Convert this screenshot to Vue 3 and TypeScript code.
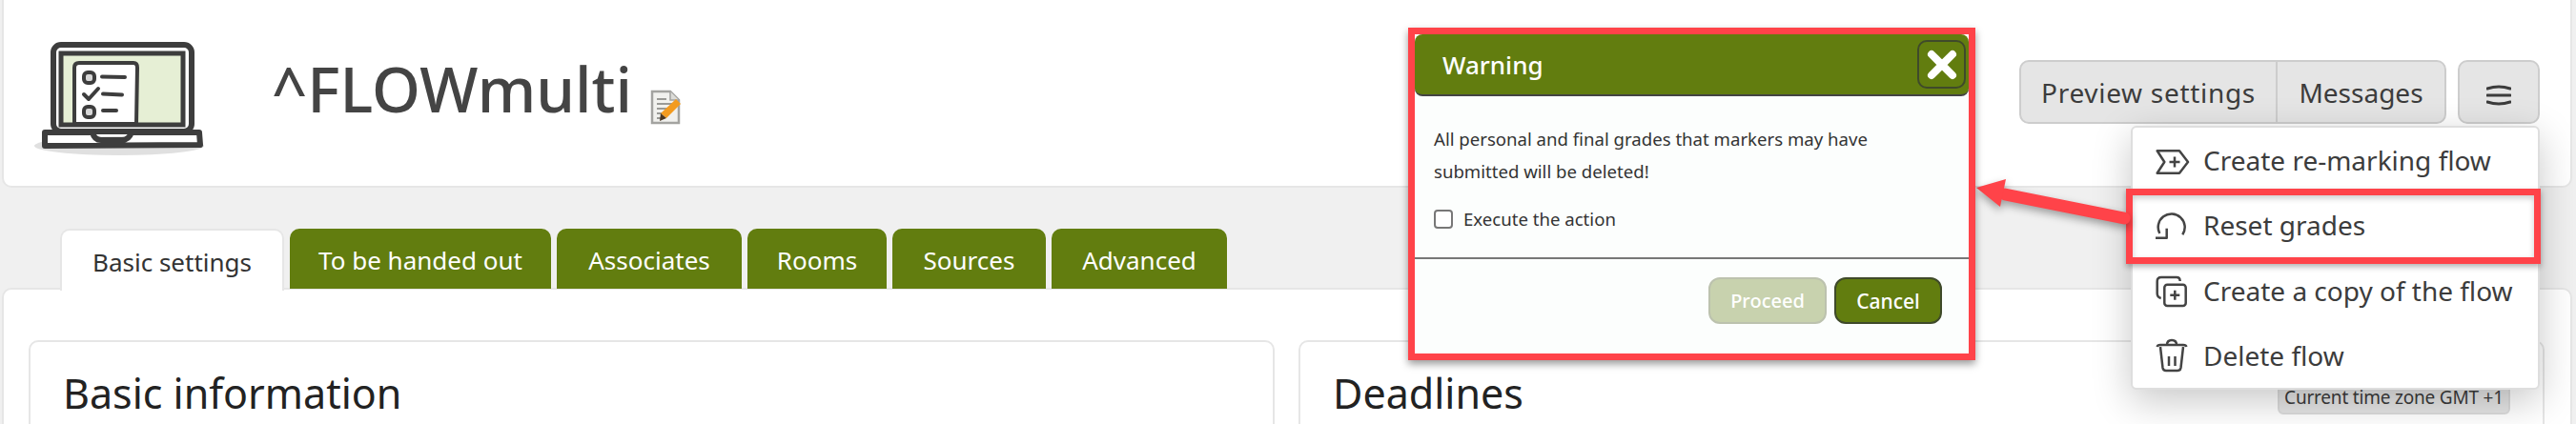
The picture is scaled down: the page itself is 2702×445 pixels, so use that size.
<template>
  <div class="page">
    <header class="cabecalho">
      <svg class="logo" viewBox="0 0 220 150" width="220" height="150">
        <ellipse cx="105" cy="133" rx="89" ry="10" fill="#e0e0e0" />
        <rect x="36" y="27" width="145" height="91" rx="8" fill="#fff" stroke="#3d3d3d" stroke-width="6" />
        <rect x="44" y="36" width="128" height="75" fill="#e6efd5" stroke="#3d3d3d" stroke-width="5" />
        <path d="M58 110 L58 51 Q58 46 63 46 L120 46 Q124 46 124 51 L123 110 Z" fill="#fff" stroke="#3d3d3d" stroke-width="4" />
        <rect x="68" y="56" width="11" height="11" rx="4" fill="#d8d8d8" stroke="#3d3d3d" stroke-width="4" />
        <path d="M87 60.5 L111 61" stroke="#3d3d3d" stroke-width="4" stroke-linecap="round" />
        <path d="M68 79 L73 84 L83 73" fill="none" stroke="#3d3d3d" stroke-width="4" stroke-linecap="round" stroke-linejoin="round" />
        <path d="M88 78.5 L108 79.5" stroke="#3d3d3d" stroke-width="4" stroke-linecap="round" />
        <rect x="68" y="92" width="11" height="11" rx="4" fill="#d8d8d8" stroke="#3d3d3d" stroke-width="4" />
        <path d="M88 96 L102 96" stroke="#3d3d3d" stroke-width="4" stroke-linecap="round" />
        <path d="M27 119 L77 119 Q79 127 86 127 L108 127 Q115 127 118 119 L189 119 L190 132 L27 133 Z" fill="#fff" stroke="#3d3d3d" stroke-width="6" stroke-linejoin="round" />
      </svg>
      <h1 class="titulo">^FLOWmulti</h1>
      <svg class="editar" viewBox="0 0 32 37" width="32" height="37">
        <path d="M2 2 L21 2 L30 11 L30 35 L2 35 Z" fill="#f1f1ee" stroke="#a3a3a0" stroke-width="2.5" />
        <path d="M21 2 L21 11 L30 11" fill="#dcdcd8" stroke="#a3a3a0" stroke-width="1.5" />
        <path d="M7 10 H17 M7 15 H23 M7 20 H20 M7 25 H15 M7 30 H13" stroke="#9a9a96" stroke-width="2" />
        <path d="M27 10 L32 15 L17 30 L11 25 Z" fill="#f39b1f" />
        <path d="M11 25 L17 30 L10 33 Z" fill="#4b3620" />
      </svg>
      <div class="acoes">
        <div class="grupo-botoes">
          <button class="botao">Preview settings</button>
          <button class="botao">Messages</button>
        </div>
        <button class="botao-menu" aria-label="Menu">
          <svg viewBox="0 0 26 22" width="26" height="22">
            <path d="M1 4 Q13 0 25 4 M1 11 H25 M1 18 Q13 22 25 18" fill="none" stroke="#3c3c3c" stroke-width="3" stroke-linecap="round" />
          </svg>
        </button>
      </div>
    </header>

    <nav class="abas">
      <span v-for="(aba, i) in abas" :key="aba" class="aba" :class="{ ativa: i === 0 }">{{ aba }}</span>
    </nav>

    <main class="conteudo">
      <section class="cartao">
        <h2>Basic information</h2>
      </section>
      <section class="cartao">
        <h2>Deadlines</h2>
        <span class="fuso">Current time zone GMT +1</span>
      </section>
    </main>

    <ul class="menu">
      <li>
        <svg viewBox="0 0 36 36" width="36" height="36">
          <path d="M1.7 8.3 H25 L34 20 L25 31.7 H1.7 L9.3 20 Z" class="traco" />
          <path d="M14.5 20 H25.5 M20 14.5 V25.5" class="traco" />
        </svg>
        Create re-marking flow
      </li>
      <li>
        <svg viewBox="0 0 36 36" width="36" height="36">
          <path d="M28.3 28.3 A14 14 0 1 0 4.3 27" class="traco" />
          <path d="M0 31.7 H11.7 V21.7" class="traco" />
        </svg>
        Reset grades
      </li>
      <li>
        <svg viewBox="0 0 36 36" width="36" height="36">
          <rect x="9.3" y="11.7" width="22.4" height="22.4" rx="3" class="traco" />
          <path d="M5.7 26 Q1.7 25 1.7 21 V8.3 Q1.7 4 6 4 H22 Q25.7 4 25.7 8" class="traco" />
          <path d="M15.3 22.7 H25.3 M20.3 17.7 V27.7" class="traco" />
        </svg>
        Create a copy of the flow
      </li>
      <li>
        <svg viewBox="0 0 36 36" width="36" height="36">
          <path d="M1.7 9 Q2 7 5 7 H29 Q32 7 32.3 9" class="traco" />
          <path d="M5 9 L7.5 31 Q8 34 11 34 H23 Q26 34 26.5 31 L29 9" class="traco" />
          <path d="M12 7 Q12 2 17 2 Q22 2 22 7 M14 19 V29 M20.5 19 V29" class="traco" />
        </svg>
        Delete flow
      </li>
    </ul>

    <div class="destaque"></div>
    <svg class="seta" viewBox="0 0 170 50" width="170" height="50">
      <path d="M35 17 L160 42" stroke="#ff4349" stroke-width="13" stroke-linecap="round" />
      <path d="M5 10 L36 1 L30 30 Z" fill="#ff4349" />
    </svg>

    <div class="moldura">
      <div class="modal">
        <div class="modal-topo">
          <span>Warning</span>
          <button class="fechar" aria-label="Close">
            <svg viewBox="0 0 32 32" width="32" height="32">
              <path d="M5 5 L27 27 M27 5 L5 27" stroke="#fff" stroke-width="8" stroke-linecap="round" />
            </svg>
          </button>
        </div>
        <div class="modal-corpo">
          <p>All personal and final grades that markers may have<br />submitted will be deleted!</p>
          <label class="confirma">
            <span class="caixa"></span>
            Execute the action
          </label>
        </div>
        <div class="modal-rodape">
          <button class="btn desativado">Proceed</button>
          <button class="btn">Cancel</button>
        </div>
      </div>
    </div>
  </div>
</template>

<script setup lang="ts">
const abas: string[] = ['Basic settings', 'To be handed out', 'Associates', 'Rooms', 'Sources', 'Advanced'];
</script>

<style>
html, body {
  margin: 0;
  overflow: hidden;
}
</style>

<style scoped>
.page {
  position: relative;
  width: 2702px;
  height: 445px;
  overflow: hidden;
  box-sizing: border-box;
  padding: 0 4px 0 2px;
  background: #f0f0f0;
  font-family: "Noto Sans", "Open Sans", sans-serif;
  color: #3c3c3c;
}

.cabecalho {
  display: flex;
  align-items: flex-start;
  height: 197px;
  box-sizing: border-box;
  background: #fff;
  border: 2px solid #e6e6e6;
  border-top: 0;
  border-radius: 0 0 10px 10px;
}

.logo {
  margin: 20px 0 0 16px;
  flex: none;
}

.titulo {
  margin: 48px 0 0 45px;
  font-size: 65px;
  line-height: 90px;
  font-weight: 500;
  color: #444;
}

.editar {
  margin: 94px 0 0 19px;
  flex: none;
}

.acoes {
  display: flex;
  gap: 12px;
  margin: 63px 32px 0 auto;
}

.grupo-botoes {
  display: flex;
}

.botao, .botao-menu {
  height: 67px;
  box-sizing: border-box;
  background: #e5e5e5;
  border: 2px solid #cdcdcd;
  font-family: inherit;
  font-size: 28px;
  color: #3c3c3c;
  padding: 0;
  white-space: nowrap;
}

.botao:first-child {
  width: 270px;
  letter-spacing: 0.7px;
  border-radius: 10px 0 0 10px;
  border-right: 1px solid #cdcdcd;
}

.botao:last-child {
  width: 178px;
  border-radius: 0 10px 10px 0;
  border-left: 1px solid #cdcdcd;
}

.botao-menu {
  width: 86px;
  padding-top: 6px;
  border-radius: 10px;
  display: flex;
  align-items: center;
  justify-content: center;
}

.abas {
  display: flex;
  gap: 6px;
  margin-top: 43px;
  padding-left: 61px;
  height: 63px;
}

.aba {
  display: flex;
  align-items: center;
  box-sizing: border-box;
  justify-content: center;
  height: 63px;
  padding-top: 2px;
  background: #627d0f;
  color: #fff;
  font-size: 26px;
  white-space: nowrap;
  border-radius: 10px 10px 0 0;
}

.aba:nth-child(1) { width: 235px; }
.aba:nth-child(2) { width: 274px; }
.aba:nth-child(3) { width: 194px; }
.aba:nth-child(4) { width: 146px; }
.aba:nth-child(5) { width: 161px; }
.aba:nth-child(6) { width: 184px; }

.aba.ativa {
  position: relative;
  z-index: 1;
  height: 65px;
  background: #fff;
  color: #333;
  border: 2px solid #e6e6e6;
  border-bottom: 0;
}

.conteudo {
  display: grid;
  grid-template-columns: 1307px 1307px;
  gap: 25px;
  height: 200px;
  box-sizing: border-box;
  margin-top: -1px;
  padding: 53px 0 0 26px;
  background: #fff;
  border: 2px solid #e6e6e6;
  border-radius: 10px 10px 0 0;
}

.cartao {
  position: relative;
  box-sizing: border-box;
  height: 200px;
  border: 2px solid #e6e6e6;
  border-radius: 10px;
  padding: 25px 0 0 34px;
}

.cartao h2 {
  margin: 0;
  font-size: 43px;
  line-height: 58px;
  font-weight: 400;
  color: #222;
}

.fuso {
  position: absolute;
  top: 41px;
  right: 34px;
  width: 244px;
  height: 35px;
  box-sizing: border-box;
  text-align: center;
  font-size: 19px;
  letter-spacing: -0.2px;
  line-height: 31px;
  white-space: nowrap;
  background: #e5e5e5;
  border: 2px solid #dcdcdc;
  border-radius: 6px;
}

.menu {
  position: absolute;
  top: 132px;
  left: 2235px;
  width: 429px;
  height: 277px;
  box-sizing: border-box;
  margin: 0;
  padding: 0;
  list-style: none;
  background: #fff;
  border: 2px solid #dedede;
  border-radius: 6px;
  box-shadow: 0 12px 40px rgba(0, 0, 0, 0.22);
}

.menu li {
  display: flex;
  align-items: center;
  gap: 14px;
  height: 68.25px;
  padding-left: 24px;
  font-size: 28px;
  color: #3c3c3c;
  white-space: nowrap;
}

.traco {
  fill: none;
  stroke: #444;
  stroke-width: 2.5;
  stroke-linejoin: round;
}

.destaque {
  position: absolute;
  top: 198px;
  left: 2230px;
  width: 435px;
  height: 79px;
  box-sizing: border-box;
  border: 7px solid #ff4349;
  box-shadow: 0 3px 6px rgba(0, 0, 0, 0.3), inset 0 3px 6px rgba(0, 0, 0, 0.2);
}

.seta {
  position: absolute;
  top: 187px;
  left: 2068px;
  filter: drop-shadow(0 4px 4px rgba(0, 0, 0, 0.35));
}

.moldura {
  position: absolute;
  top: 29px;
  left: 1477px;
  width: 595px;
  height: 349px;
  box-sizing: border-box;
  border: 7px solid #ff4349;
  box-shadow: 0 4px 8px rgba(0, 0, 0, 0.4);
  background: #fcfefd;
}

.modal {
  display: flex;
  flex-direction: column;
  height: 100%;
}

.modal-topo {
  display: flex;
  align-items: center;
  justify-content: space-between;
  height: 65px;
  box-sizing: border-box;
  padding: 0 3px 0 29px;
  background: #627d0f;
  border-bottom: 2px solid #444;
  border-radius: 8px;
  color: #fff;
  font-size: 26px;
  font-weight: 500;
}

.fechar {
  display: flex;
  align-items: center;
  justify-content: center;
  width: 51px;
  height: 51px;
  padding: 0;
  background: transparent;
  border: 2px solid #3f4a2a;
  border-radius: 10px;
}

.modal-corpo {
  height: 171px;
  box-sizing: border-box;
  padding: 28px 0 0 20px;
  border-bottom: 2px solid #777;
  font-size: 18.6px;
  line-height: 34px;
  color: #333;
}

.modal-corpo p {
  margin: 0;
}

.confirma {
  display: flex;
  align-items: center;
  gap: 11px;
  margin-top: 16px;
}

.caixa {
  width: 20px;
  height: 20px;
  box-sizing: border-box;
  background: #fff;
  border: 2px solid #777;
  border-radius: 4px;
}

.modal-rodape {
  display: flex;
  justify-content: flex-end;
  gap: 8px;
  padding: 19px 28px 0 0;
}

.btn {
  width: 113px;
  height: 49px;
  box-sizing: border-box;
  padding: 0;
  background: #627d0f;
  border: 2px solid #3f4a2a;
  border-radius: 12px;
  font-family: inherit;
  font-size: 21px;
  font-weight: 500;
  color: #fff;
}

.btn.desativado {
  width: 124px;
  font-size: 20px;
  background: #c8d2ae;
  border-color: #bcc2ae;
}
</style>
